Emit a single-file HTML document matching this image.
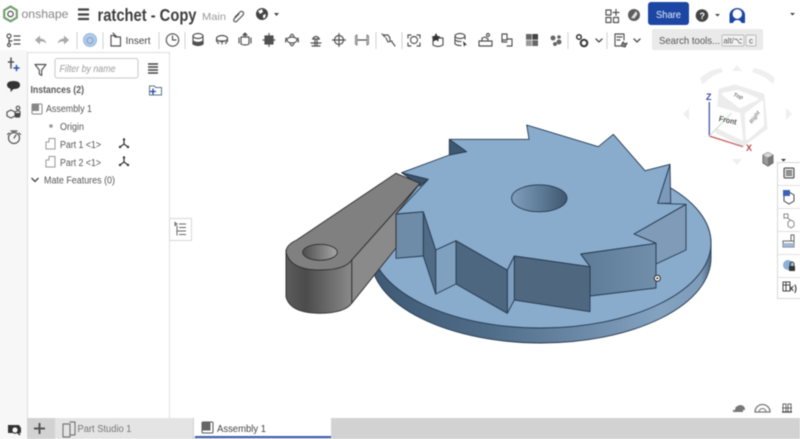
<!DOCTYPE html>
<html><head><meta charset="utf-8"><style>
html,body{margin:0;padding:0;background:#fff;width:800px;height:439px;overflow:hidden}
svg{display:block;filter:blur(.45px)}
text{font-family:"Liberation Sans",sans-serif;fill:#555}
.i{fill:none;stroke:#505050;stroke-width:1.15;stroke-linejoin:round;stroke-linecap:round}
.e{stroke:#263a50;stroke-width:.9;stroke-linejoin:round}
.a{stroke:#2e2e2e;stroke-width:.9;stroke-linejoin:round}
</style></head><body>
<svg width="800" height="439" viewBox="0 0 800 439" xmlns="http://www.w3.org/2000/svg">
<defs>
<linearGradient id="ds"><stop offset="0" stop-color="#3f5a75"/><stop offset=".35" stop-color="#4f6c88"/><stop offset=".85" stop-color="#84a3c1"/><stop offset=".97" stop-color="#7f9cb9"/><stop offset="1" stop-color="#4d6882"/></linearGradient>
<linearGradient id="hg"><stop offset="0" stop-color="#7f9fbe"/><stop offset=".5" stop-color="#5f7d99"/><stop offset="1" stop-color="#3f566e"/></linearGradient>
<linearGradient id="ag"><stop offset="0" stop-color="#5c5c5c"/><stop offset=".3" stop-color="#4b4b4b"/><stop offset="1" stop-color="#8a8a8a"/></linearGradient>
<linearGradient id="ah"><stop offset="0" stop-color="#4f4f4f"/><stop offset="1" stop-color="#a5a5a5"/></linearGradient>
<linearGradient id="w7" x1="0" x2="1"><stop offset="0" stop-color="#5d7a96"/><stop offset="1" stop-color="#718fab"/></linearGradient>
</defs>

<!-- rails -->
<rect x="0" y="50" width="27" height="389" fill="#f7f7f7"/>
<rect x="27.5" y="52.5" width="142" height="366" fill="#fff" stroke="#dedede"/>

<!-- header -->
<path d="M10.500 6.500l6.300 3.700v7.400l-6.300 3.700-6.300-3.700v-7.400z" fill="none" stroke="#74a06f" stroke-width="2.200"/>
<circle cx="10.500" cy="14" r="2.700" fill="none" stroke="#5a5a5a" stroke-width="1.300"/>
<text x="21.500" y="18" font-size="12" textLength="47" lengthAdjust="spacingAndGlyphs" style="fill:#858585">onshape</text>
<path d="M78 9.500h11M78 14.500h11M78 19h11" stroke="#444" stroke-width="2.200"/>
<text x="97.500" y="21" font-size="17.500" font-weight="bold" textLength="99" lengthAdjust="spacingAndGlyphs" style="fill:#3f3f3f">ratchet - Copy</text>
<text x="202" y="20" font-size="10.500" textLength="24" lengthAdjust="spacingAndGlyphs" style="fill:#999">Main</text>
<path class="i" d="M235 17l5-5a2 2 0 0 1 3 3l-6 6a1.500 1.500 0 0 1-3-2l5-5" stroke-width="1.100"/>
<circle cx="262" cy="14" r="6" fill="#444"/><path d="M258 11l4-2 1 3-3 2zM263 15l3-1-1 4-2 0z" fill="#fff"/>
<path d="M274 13h5l-2.500 3z" fill="#444"/>

<g class="i"><rect x="606" y="10" width="5" height="5"/><rect x="606" y="17.500" width="5" height="5"/><rect x="613.500" y="17.500" width="5" height="5"/><path d="M616 9.500v6M613 12.500h6"/></g>
<circle cx="634" cy="15" r="6" fill="#5c5c5c"/><path d="M631 18l5-7 1.500 3-3 4.500z" fill="#ddd"/>
<rect x="648" y="2" width="41" height="23" rx="3" fill="#1c46a4"/>
<text x="656" y="18" font-size="10.500" textLength="25" lengthAdjust="spacingAndGlyphs" style="fill:#e8eefc">Share</text>
<circle cx="702" cy="15.500" r="6.300" fill="#444"/><text x="699.500" y="19" font-size="9" font-weight="bold" style="fill:#fff">?</text>
<path d="M715 14h5l-2.500 2.500z" fill="#444"/>
<path d="M729.500 23v-9a8 8 0 0 1 15.500 0v9h-3.500q-1-3-4.250-3t-4.250 3z" fill="#1c46a4"/><circle cx="737.300" cy="14" r="4.700" fill="#fff"/>
<path d="M790 13h5l-2.500 2.500z" fill="#444"/>

<!-- left rail icons -->
<g class="i">
<circle cx="9" cy="36" r="2"/><circle cx="9" cy="45" r="1.500"/><path d="M9 38v5M14 36h6M14 40h6M14 44h6M9 41h3"/>
<path d="M11 58v10M8.500 62h5" stroke-width="1.500"/><path d="M14 68h5M16.500 65.500v5" style="stroke:#2a55a8" stroke-width="1.500"/>
</g>
<path d="M7 85q0-4 6.500-4t6.500 4-6.500 4l-3 3v-3.300q-3.500-1-3.500-3.700z" fill="#333"/>
<g class="i">
<path d="M7 112l4-2 4 2v4l-4 2-4-2z"/><path d="M15 112l3-1.500 2 1v4l-2 1-3-1"/><circle cx="18" cy="108" r="1.800"/><rect x="15.500" y="113.500" width="4" height="3.500" fill="#444"/>
<circle cx="14" cy="138" r="5.500"/><path d="M14 138l2-3M11 131h6M9 133l-1.500 1.500M19 133l1.500 1.500"/>
</g>
<path d="M8 425h11l2 3v5H8z" fill="#333"/>
<circle cx="15" cy="430" r="3.200" fill="#f6f6f6" stroke="#333" stroke-width="1.200"/><path d="M17.500 432.500l2.500 2.500" stroke="#333" stroke-width="1.400"/>

<!-- toolbar -->
<g fill="#a8a8a8"><path d="M35 40l5-4.500v3q5 0 6.500 5-3-2.500-6.500-2v3z"/><path d="M69 40l-5-4.500v3q-5 0-6.500 5 3-2.500 6.500-2v3z"/></g>
<circle cx="90" cy="40" r="6.500" fill="#b4cbe8" stroke="#9ab7dd"/><circle cx="90" cy="40.500" r="3" fill="none" stroke="#7a9dd0"/>
<path d="M77 32v17M103 32v17M159 32v17M185 32v17M376 32v17M402 32v17M568 32v17M607 32v17" fill="none" stroke="#d2d2d2"/>
<path class="i" d="M111 35.500h3l1 1.500h5.500v9h-9.500zM113 33l4 4"/>
<text x="125.500" y="44" font-size="10.500" textLength="25" lengthAdjust="spacingAndGlyphs" style="fill:#444">Insert</text>
<g class="i">
<circle cx="172.500" cy="40" r="6.200"/><path d="M172.500 36v4h3.500"/>
<ellipse cx="198" cy="36" rx="5" ry="2.500"/><path d="M193 36v8q5 3 10 0v-8"/><path d="M193 41q5 3 10 0v3q-5 3-10 0z" fill="#505050"/>
<ellipse cx="222" cy="38.500" rx="5.500" ry="3"/><path d="M216.500 39v2l2 2.500M227.500 39v2l-2 2.500M219 41h6M222 41v3"/>
<path d="M241 37h8v7q-4 2-8 0zM245 37v-2"/><path d="M243 35l2-2 2 2z" fill="#505050"/><path d="M239 38v5M251 38v5"/>
<path d="M269 33.500v13M263 40h12"/><rect x="265" y="36" width="3" height="3" fill="#505050"/><rect x="270" y="36" width="3" height="3" fill="#505050"/><rect x="265" y="41" width="3" height="3" fill="#505050"/><rect x="270" y="41" width="3" height="3" fill="#505050"/>
<ellipse cx="292" cy="40" rx="5" ry="3"/><path d="M292 34l-2 2M292 34l2 2M292 46l-2-2M292 46l2-2M286 38l-.5 4M298 38l.5 4"/>
<path d="M312 46h8M312.500 39q3.500-5 7 0zM315 39v7M317 39v7M311 43h10"/>
<circle cx="339" cy="40" r="4.500"/><path d="M339 33.500v13M332.500 40h13"/>
<path d="M358 40h8" /><path d="M357 35l-1.500 1v8l1.500 1zM367 35l1.500 1v8l-1.500 1z" style="stroke:#888"/>
<path d="M383 35h5l2 3v3M395 46l-3-4M386 38l2 4 4-1M382 34l3 3"/>
<path d="M408 35h3M417 35h3M408 46h3M417 46h3M408 35v3M420 35v3M408 43v3M420 43v3"/><circle cx="414" cy="40" r="3.500"/>
<path d="M433 38h10v7q-5 3-10 0z"/>
<ellipse cx="460" cy="36" rx="5" ry="2.500"/><path d="M455 36v8q3 2 6 1.500M465 36v3M455 40q3 2 6 1.500"/>
<path d="M479 41h13v5h-13zM482 41v-3l3-1 3 2v2"/><circle cx="488" cy="35" r="1.500"/>
<path d="M502 34h5v6h-5zM507 39h5v7h-5M502 40v2h5"/>
</g>
<path d="M434.500 36l1.500-3 1.500 3 3 .5-2 2v3l-2.500-1.500-2.500 1.500v-3l-2-2z" fill="#333"/>
<path d="M463 41l4 4-2 0-1 2z" fill="#333"/>
<rect x="526" y="34" width="12" height="12" fill="#666"/><rect x="532" y="34" width="6" height="6" fill="#444"/><rect x="526" y="40" width="6" height="6" fill="#999"/><path d="M532 34v12M526 40h12" stroke="#eee" stroke-width=".7"/>
<g fill="#666"><circle cx="553" cy="38" r="2.500"/><circle cx="559" cy="42" r="2.500"/><circle cx="555" cy="44" r="2"/><circle cx="559" cy="37" r="1.800"/></g>
<circle cx="579" cy="37" r="2.300" fill="none" stroke="#333" stroke-width="1.500"/><circle cx="584" cy="43" r="3.300" fill="none" stroke="#333" stroke-width="2"/>
<path class="i" d="M596 39l3 3 3-3M634 39l3 3 3-3" style="stroke-width:1.400"/>
<g class="i"><path d="M615 34h9v6M615 34v12h5"/><path d="M617 37h5M617 40h3"/><path d="M621 46l2-4 2 2 2-1-2 4z" fill="#888"/></g>

<rect x="652" y="29" width="111" height="21" rx="2" fill="#eaeaea"/>
<text x="659" y="44" font-size="10.500" textLength="61" lengthAdjust="spacingAndGlyphs" style="fill:#555">Search tools...</text>
<rect x="722" y="35" width="22" height="11" rx="1" fill="#f2f2f2" stroke="#aaa" stroke-width=".7"/>
<text x="723.500" y="43.500" font-size="8" textLength="19" lengthAdjust="spacingAndGlyphs" style="fill:#555">alt/⌥</text>
<rect x="746" y="35" width="10" height="11" rx="1" fill="#f2f2f2" stroke="#aaa" stroke-width=".7"/>
<text x="749" y="43.500" font-size="8" style="fill:#555">c</text>

<!-- sidebar -->
<path class="i" d="M35 64.500h11l-4.300 5.500v5.500l-2.400-1.500v-4z"/>
<rect x="55" y="58.500" width="83" height="19.500" rx="2" fill="#fff" stroke="#c8c8c8"/>
<text x="59.500" y="72" font-size="10" font-style="italic" textLength="56" lengthAdjust="spacingAndGlyphs" style="fill:#9a9a9a">Filter by name</text>
<path d="M148 64h10M148 67h10M148 70h10M148 73h10" stroke="#444" stroke-width="1.600"/>
<text x="30.500" y="93" font-size="10" font-weight="bold" textLength="53.500" lengthAdjust="spacingAndGlyphs" style="fill:#5a5a5a">Instances (2)</text>
<path d="M149.500 86h5l1 1.500h6v7.500h-12z" fill="none" stroke="#5a7590"/><path d="M150 91.500h6M153 88.500v6" stroke="#1c46a4" stroke-width="1.300"/>
<rect x="32" y="104" width="10" height="10" rx="1" fill="#fff" stroke="#888"/><rect x="32" y="104" width="7" height="7" fill="#888"/>
<text x="46" y="112" font-size="10" textLength="46" lengthAdjust="spacingAndGlyphs">Assembly 1</text>
<circle cx="51" cy="126" r="1.800" fill="#999"/>
<text x="60" y="130" font-size="10" textLength="24" lengthAdjust="spacingAndGlyphs">Origin</text>
<path d="M46 142h3v-3.500h6v10.500h-9z" fill="none" stroke="#999"/>
<text x="60" y="148" font-size="10" textLength="41" lengthAdjust="spacingAndGlyphs">Part 1 &lt;1&gt;</text>
<path d="M124 139.500v4.500l-4 3M124 144l4 3" fill="none" stroke="#333" stroke-width="1.200"/><circle cx="124" cy="139.500" r="1.200" fill="#333"/><circle cx="120" cy="147" r="1.200" fill="#333"/><circle cx="128" cy="147" r="1.200" fill="#333"/>
<path d="M46 160h3v-3.500h6v10.500h-9z" fill="none" stroke="#999"/>
<text x="60" y="166" font-size="10" textLength="41" lengthAdjust="spacingAndGlyphs">Part 2 &lt;1&gt;</text>
<path d="M124 157.500v4.500l-4 3M124 162l4 3" fill="none" stroke="#333" stroke-width="1.200"/><circle cx="124" cy="157.500" r="1.200" fill="#333"/><circle cx="120" cy="165" r="1.200" fill="#333"/><circle cx="128" cy="165" r="1.200" fill="#333"/>
<path d="M31.500 178l3.500 3.500 3.500-3.500" fill="none" stroke="#444" stroke-width="1.300"/>
<text x="44" y="183.500" font-size="10" textLength="71" lengthAdjust="spacingAndGlyphs">Mate Features (0)</text>
<rect x="169.500" y="218.500" width="22" height="22" fill="#fff" stroke="#d8d8d8"/>
<path d="M175 222.500l2 1.500-2 1.500zM179 224h7M179 227.500h7M179 231h7M179 234.500h7M177 225.500v10M177 231h2" fill="none" stroke="#666"/>

<!-- model: disk -->
<path d="M371 243a170 85 0 0 1 340 0v15a170 85 0 0 1-340 0z" fill="url(#ds)" class="e"/>
<ellipse cx="541" cy="243" rx="170" ry="85" fill="#89abcc" class="e"/>
<!-- walls -->
<path d="M670 164.300L657.700 203.300 670.700 203.300z" fill="#7b9ab9" class="e"/>
<path d="M634 234L686 204.300V250L656 264V243.300z" fill="#7f9bb7" class="e"/>
<path d="M580.700 254L656 243.300V288L590 296V266.700z" fill="url(#w7)" class="e"/>
<path d="M514.300 256L590 266.700V311.700L514.300 300z" fill="#4f6880" class="e"/>
<path d="M507.300 270L514.300 256V300L507.300 313.300z" fill="#7d9dbd" class="e"/>
<path d="M456 240.700L507.300 270V313.300L456 284z" fill="#4d6780" class="e"/>
<path d="M435.700 250L456 240.700V284L435.700 294z" fill="#80a0bf" class="e"/>
<path d="M423.300 211.700L435.700 250V294L423.300 256z" fill="#4f6b85" class="e"/>
<path d="M396 214L423.300 211.700V256L396 258.300z" fill="#6e8ba8" class="e"/>
<path d="M449.300 139.300L466.700 151.700 449.300 155z" fill="#3f5872" class="e"/>
<path d="M401.700 172.700L428.300 179.300 420 186z" fill="#3a526b" class="e"/>
<!-- gear top -->
<path d="M401.700 172.700L449.300 155 466.700 151.700 449.300 139.300H529L526.700 125 598.300 146.700 613.300 134.300 645 170.700 670 164.300 657.700 203.300 686 204.300 634 234 656 243.300 580.700 254 590 266.700 514.300 256 507.300 270 456 240.700 435.700 250 423.300 211.700 396 214 428.300 179.300z" fill="#89abcc" class="e"/>
<ellipse cx="539.300" cy="198.300" rx="27.700" ry="13.500" fill="url(#hg)" class="e"/>
<circle cx="657.300" cy="278.300" r="3" fill="#fff" stroke="#222"/><circle cx="657.300" cy="278.300" r="1" fill="#222"/>
<!-- arm -->
<path d="M351.700 260L420 183.300 396 214V248L351.700 303.300z" fill="#8a8a8a" class="a"/>
<path d="M286 250V296.700Q290 313.300 320 313.300Q345 313 351.700 303.300V260z" fill="url(#ag)" class="a"/>
<path d="M396 173.300L420 183.300 351.700 260Q345 270 320 270 290 270 286 252 286 245 296.700 240z" fill="#808080" class="a"/>
<ellipse cx="320" cy="252.300" rx="17.300" ry="8" fill="url(#ah)" class="a"/>

<!-- view cube -->
<g fill="#efefef">
<path d="M737 65l5 6h-10zM689 108v12l-6-6zM786 108l6 6-6 6zM732 159h10l-5 6z"/>
<path d="M702 84l-2-6q9-8 21-10l2 4q-11 3-17 10z"/>
<path d="M752 72l2-4q12 2 21 10l-2 6q-8-8-21-12z"/>
</g>
<path d="M720 90L735 86 763 95 766 128 743 145 717 132z" style="fill:#ececec;stroke:#ececec;stroke-width:3;stroke-linejoin:round"/>
<g style="fill:#fff;stroke:#fff;stroke-width:2.500;stroke-linejoin:round">
<path d="M723 94L738 91 757 99 740 107z"/>
<path d="M718 108L739 114 742 139 717 127z"/>
<path d="M746 114L762 102 763 125 747 139z"/>
</g>
<path d="M709.300 136V102" stroke="#3a44a8" stroke-width="1.200"/><path d="M709.300 136L743 146.700" stroke="#c05a5a" stroke-width="1.200"/><path d="M709.300 136L731.700 113" stroke="#cfe3c9" stroke-width="1.200"/>
<text x="706" y="100" font-size="9" font-weight="bold" style="fill:#3a44a8">Z</text>
<text x="746" y="151" font-size="9" font-weight="bold" style="fill:#b84848">X</text>
<text x="0" y="0" font-size="8" font-weight="bold" transform="translate(718.500 121) rotate(12)" textLength="18" lengthAdjust="spacingAndGlyphs" style="fill:#555">Front</text>
<text x="0" y="0" font-size="5.500" font-weight="bold" font-style="italic" transform="translate(733 96) rotate(20)" style="fill:#777">Top</text>
<text x="0" y="0" font-size="5.500" font-weight="bold" font-style="italic" transform="translate(752 124) rotate(-55)" style="fill:#888">Right</text>
<path d="M763 155l5-2.500 5 2.500v8l-5 3-5-3z" fill="#999" stroke="#666"/><path d="M763 155l5 2.500 5-2.500-5-2.500z" fill="#d8d8d8"/><path d="M768 157.500v8.500l5-3v-8z" fill="#777"/>
<path d="M781 159h5l-2.500 2.500z" fill="#333"/>

<!-- right panel -->
<rect x="777.500" y="162.500" width="30" height="136" fill="#fff" stroke="#d8d8d8"/>
<path d="M778 185.500h22M778 208.500h22M778 231.500h22M778 254.500h22M778 277.500h22" stroke="#e2e2e2"/>
<rect x="784" y="168" width="10" height="10" rx="1" fill="#ddd" stroke="#444"/><path d="M786 171h6M786 173h6M786 175h6" stroke="#444"/>
<path d="M784 195l5-3 5 3v6l-5 3-5-3z" fill="#fff" stroke="#444"/><rect x="783" y="190" width="7" height="6" fill="#3b63b5"/>
<g fill="none" stroke="#888"><rect x="784" y="214" width="4" height="4"/><path d="M788 222l3-2 3 2v4l-3 2-3-2z"/><path d="M788 218l2 2"/></g>
<path d="M783 241h11v6h-11zM791 241v-6h3v6" fill="none" stroke="#666"/><rect x="783" y="243" width="11" height="4" fill="#9fb8d4"/>
<circle cx="788" cy="265" r="5" fill="#8cafd4"/><rect x="789" y="266" width="6" height="5" fill="#333"/><path d="M790 266v-2a2 2 0 0 1 4 0v2" fill="none" stroke="#333"/>
<path d="M783 282h7v9h-7zM783 285h7M786 282v9" fill="none" stroke="#444"/><text x="789" y="291" font-size="9" font-weight="bold" style="fill:#444">x)</text>

<!-- bottom right -->
<path d="M733 410h10v2h-10zM735 410q0-4 5-5 5 0 5 5z" fill="#777"/>
<path d="M755 412a7.500 7.500 0 0 1 15 0z" fill="none" stroke="#777" stroke-width="1.300"/><path d="M759 412a3.500 3.500 0 0 1 7 0" fill="none" stroke="#777"/>
<path d="M783 404h3v8h-3zM788 404h3v8h-3zM782 408h10" fill="none" stroke="#666"/><path d="M782 412h10" stroke="#444" stroke-width="1.300"/>

<!-- tabs -->
<rect x="27" y="418" width="773" height="21" fill="#d2d2d2"/>
<path d="M34 428.500h11M39.500 423v11" stroke="#555" stroke-width="2"/>
<rect x="55" y="418" width="138" height="21" fill="#e4e4e4"/>
<path class="i" d="M63 424h7v13h-7zM70 422h5v13h-5" style="stroke:#777"/>
<text x="77.500" y="432" font-size="10" textLength="54" lengthAdjust="spacingAndGlyphs" style="fill:#777">Part Studio 1</text>
<rect x="194" y="418" width="137" height="19" fill="#fff"/>
<rect x="195" y="436" width="136" height="2" fill="#3f5fb0"/>
<rect x="202" y="422" width="11" height="11" rx="1" fill="#fff" stroke="#555"/><rect x="202" y="422" width="8.500" height="8.500" fill="#666"/>
<text x="217" y="432" font-size="10" textLength="49" lengthAdjust="spacingAndGlyphs" style="fill:#444">Assembly 1</text>
</svg>
</body></html>
